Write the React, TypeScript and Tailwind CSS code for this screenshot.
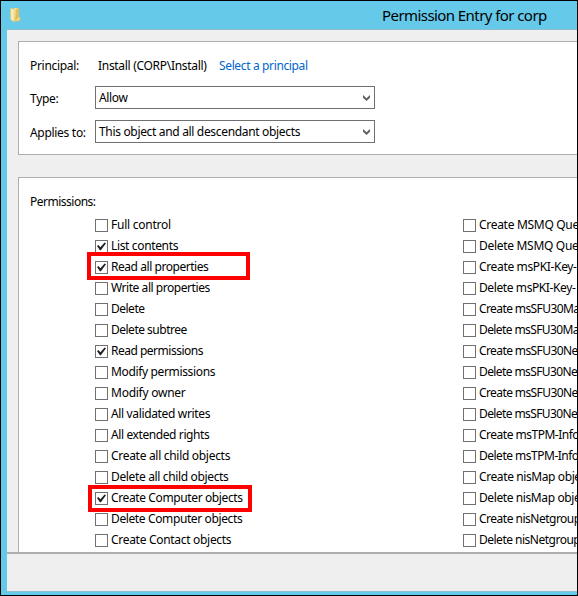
type Item = { label: string; checked?: boolean; tracking: string };

const left: Item[] = [
  { label: "Full control", tracking: "tracking-[-0.25px]" },
  { label: "List contents", checked: true, tracking: "tracking-[-0.35px]" },
  { label: "Read all properties", checked: true, tracking: "tracking-[-0.45px]" },
  { label: "Write all properties", tracking: "tracking-[-0.45px]" },
  { label: "Delete", tracking: "tracking-[-0.5px]" },
  { label: "Delete subtree", tracking: "tracking-[-0.5px]" },
  { label: "Read permissions", checked: true, tracking: "tracking-[-0.5px]" },
  { label: "Modify permissions", tracking: "tracking-[-0.35px]" },
  { label: "Modify owner", tracking: "tracking-[-0.25px]" },
  { label: "All validated writes", tracking: "tracking-[-0.35px]" },
  { label: "All extended rights", tracking: "tracking-[-0.4px]" },
  { label: "Create all child objects", tracking: "tracking-[-0.3px]" },
  { label: "Delete all child objects", tracking: "tracking-[-0.35px]" },
  { label: "Create Computer objects", checked: true, tracking: "tracking-[-0.38px]" },
  { label: "Delete Computer objects", tracking: "tracking-[-0.38px]" },
  { label: "Create Contact objects", tracking: "tracking-[-0.3px]" },
];

const right: Item[] = [
  { label: "Create MSMQ Que", tracking: "tracking-[-0.3px]" },
  { label: "Delete MSMQ Que", tracking: "tracking-[-0.3px]" },
  { label: "Create msPKI-Key-", tracking: "tracking-[-0.35px]" },
  { label: "Delete msPKI-Key-", tracking: "tracking-[-0.4px]" },
  { label: "Create msSFU30Ma", tracking: "tracking-[-0.6px]" },
  { label: "Delete msSFU30Ma", tracking: "tracking-[-0.6px]" },
  { label: "Create msSFU30Ne", tracking: "tracking-[-0.6px]" },
  { label: "Delete msSFU30Ne", tracking: "tracking-[-0.6px]" },
  { label: "Create msSFU30Ne", tracking: "tracking-[-0.6px]" },
  { label: "Delete msSFU30Ne", tracking: "tracking-[-0.6px]" },
  { label: "Create msTPM-Info", tracking: "tracking-[-0.5px]" },
  { label: "Delete msTPM-Info", tracking: "tracking-[-0.5px]" },
  { label: "Create nisMap obje", tracking: "tracking-[-0.4px]" },
  { label: "Delete nisMap obje", tracking: "tracking-[-0.4px]" },
  { label: "Create nisNetgroup", tracking: "tracking-[-0.5px]" },
  { label: "Delete nisNetgroup", tracking: "tracking-[-0.5px]" },
];

function Permission({ label, checked, tracking }: Item) {
  return (
    <label className="flex h-[21px] items-center gap-[3px] whitespace-nowrap">
      <span className="mt-px h-[13px] w-[13px] shrink-0 border border-[#707070] bg-white">
        {checked && (
          <svg viewBox="0 0 11 11" className="block h-[11px] w-[11px]">
            <path d="M1 5 L2.4 3.9 L4.4 6.2 L8.6 1.4 L10 2.3 L4.9 9.2 H3.9 Z" fill="#212121" />
          </svg>
        )}
      </span>
      <span className={tracking}>{label}</span>
    </label>
  );
}

function Column({ items }: { items: Item[] }) {
  return (
    <div className="w-[368px] shrink-0">
      {items.map((item, i) => (
        <Permission key={i} {...item} />
      ))}
    </div>
  );
}

function Select({ value }: { value: string }) {
  return (
    <div className="flex h-[23px] w-[280px] items-center justify-between border border-[#707070] bg-white pr-1 pl-[3px]">
      <span className="tracking-[-0.33px]">{value}</span>
      <svg viewBox="0 0 7 6" className="h-[6px] w-[7px]">
        <path d="M0 0 L3.5 3.2 L7 0 V2.8 L3.5 6 L0 2.8 Z" fill="#606060" />
      </svg>
    </div>
  );
}

function Folder() {
  return (
    <svg viewBox="0 0 14 16" className="h-4 w-[14px]">
      <path d="M5 1 H9.5 V13 H5 Z" fill="#f1dc91" />
      <path d="M8 1.5 L10 1 V10 L11.5 11 V13.5 L6 15 L7 3 Z" fill="#dfbd5f" />
      <path d="M1.5 1 L5.5 2.5 V15 L1.5 12.5 Z" fill="#f9ebae" stroke="#dcc36b" strokeWidth=".5" />
      <path d="M6 14 L10.5 9.5 V13 Z" fill="#f4df91" />
    </svg>
  );
}

export default function App() {
  return (
    <div className="relative flex h-[596px] w-[578px] flex-col overflow-hidden border border-black bg-[#65c9ea] font-['Noto_Sans','Open_Sans',sans-serif] text-[12px] leading-4 tracking-[-0.3px] text-black">
      <header className="flex h-7 shrink-0 items-center pl-2">
        <Folder />
        <h1 className="-mt-px ml-[359px] text-[15px] leading-5 tracking-[-0.57px] whitespace-nowrap">Permission Entry for corp</h1>
      </header>
      <main className="ml-[6px] flex h-[563px] flex-col border-y border-[#8dbfd0] bg-[#efefef]">
        <section className="mt-[11px] ml-[11px] h-[114px] shrink-0 border border-r-0 border-[#aeaeae] bg-white pl-[11px]">
          <div className="mt-4 flex h-4 items-center">
            <span className="w-[68px]">Principal:</span>
            <span className="w-[121px] whitespace-nowrap">Install (CORP\Install)</span>
            <a className="tracking-[-0.36px] whitespace-nowrap text-[#0066cc]">Select a principal</a>
          </div>
          <div className="mt-3 flex h-[23px] items-center">
            <span className="w-[65px] pt-0.5">Type:</span>
            <Select value="Allow" />
          </div>
          <div className="mt-[11px] flex h-[23px] items-center">
            <span className="w-[65px] pt-0.5 whitespace-nowrap">Applies to:</span>
            <Select value="This object and all descendant objects" />
          </div>
        </section>
        <section className="mt-[22px] ml-[11px] h-[375px] shrink-0 overflow-hidden border-t border-l border-[#aeaeae] bg-white pl-[11px]">
          <div className="mt-4 h-4 tracking-[-0.5px]">Permissions:</div>
          <div className="mt-1 ml-[65px] flex">
            <Column items={left} />
            <Column items={right} />
          </div>
        </section>
        <footer className="flex-1 border-t-2 border-[#aeaeae]" />
      </main>
      <div className="absolute top-[251px] left-[86px] h-[28px] w-[163px] border-4 border-[#ff0000]" />
      <div className="absolute top-[484px] left-[87px] h-[27px] w-[164px] border-4 border-[#ff0000]" />
    </div>
  );
}
